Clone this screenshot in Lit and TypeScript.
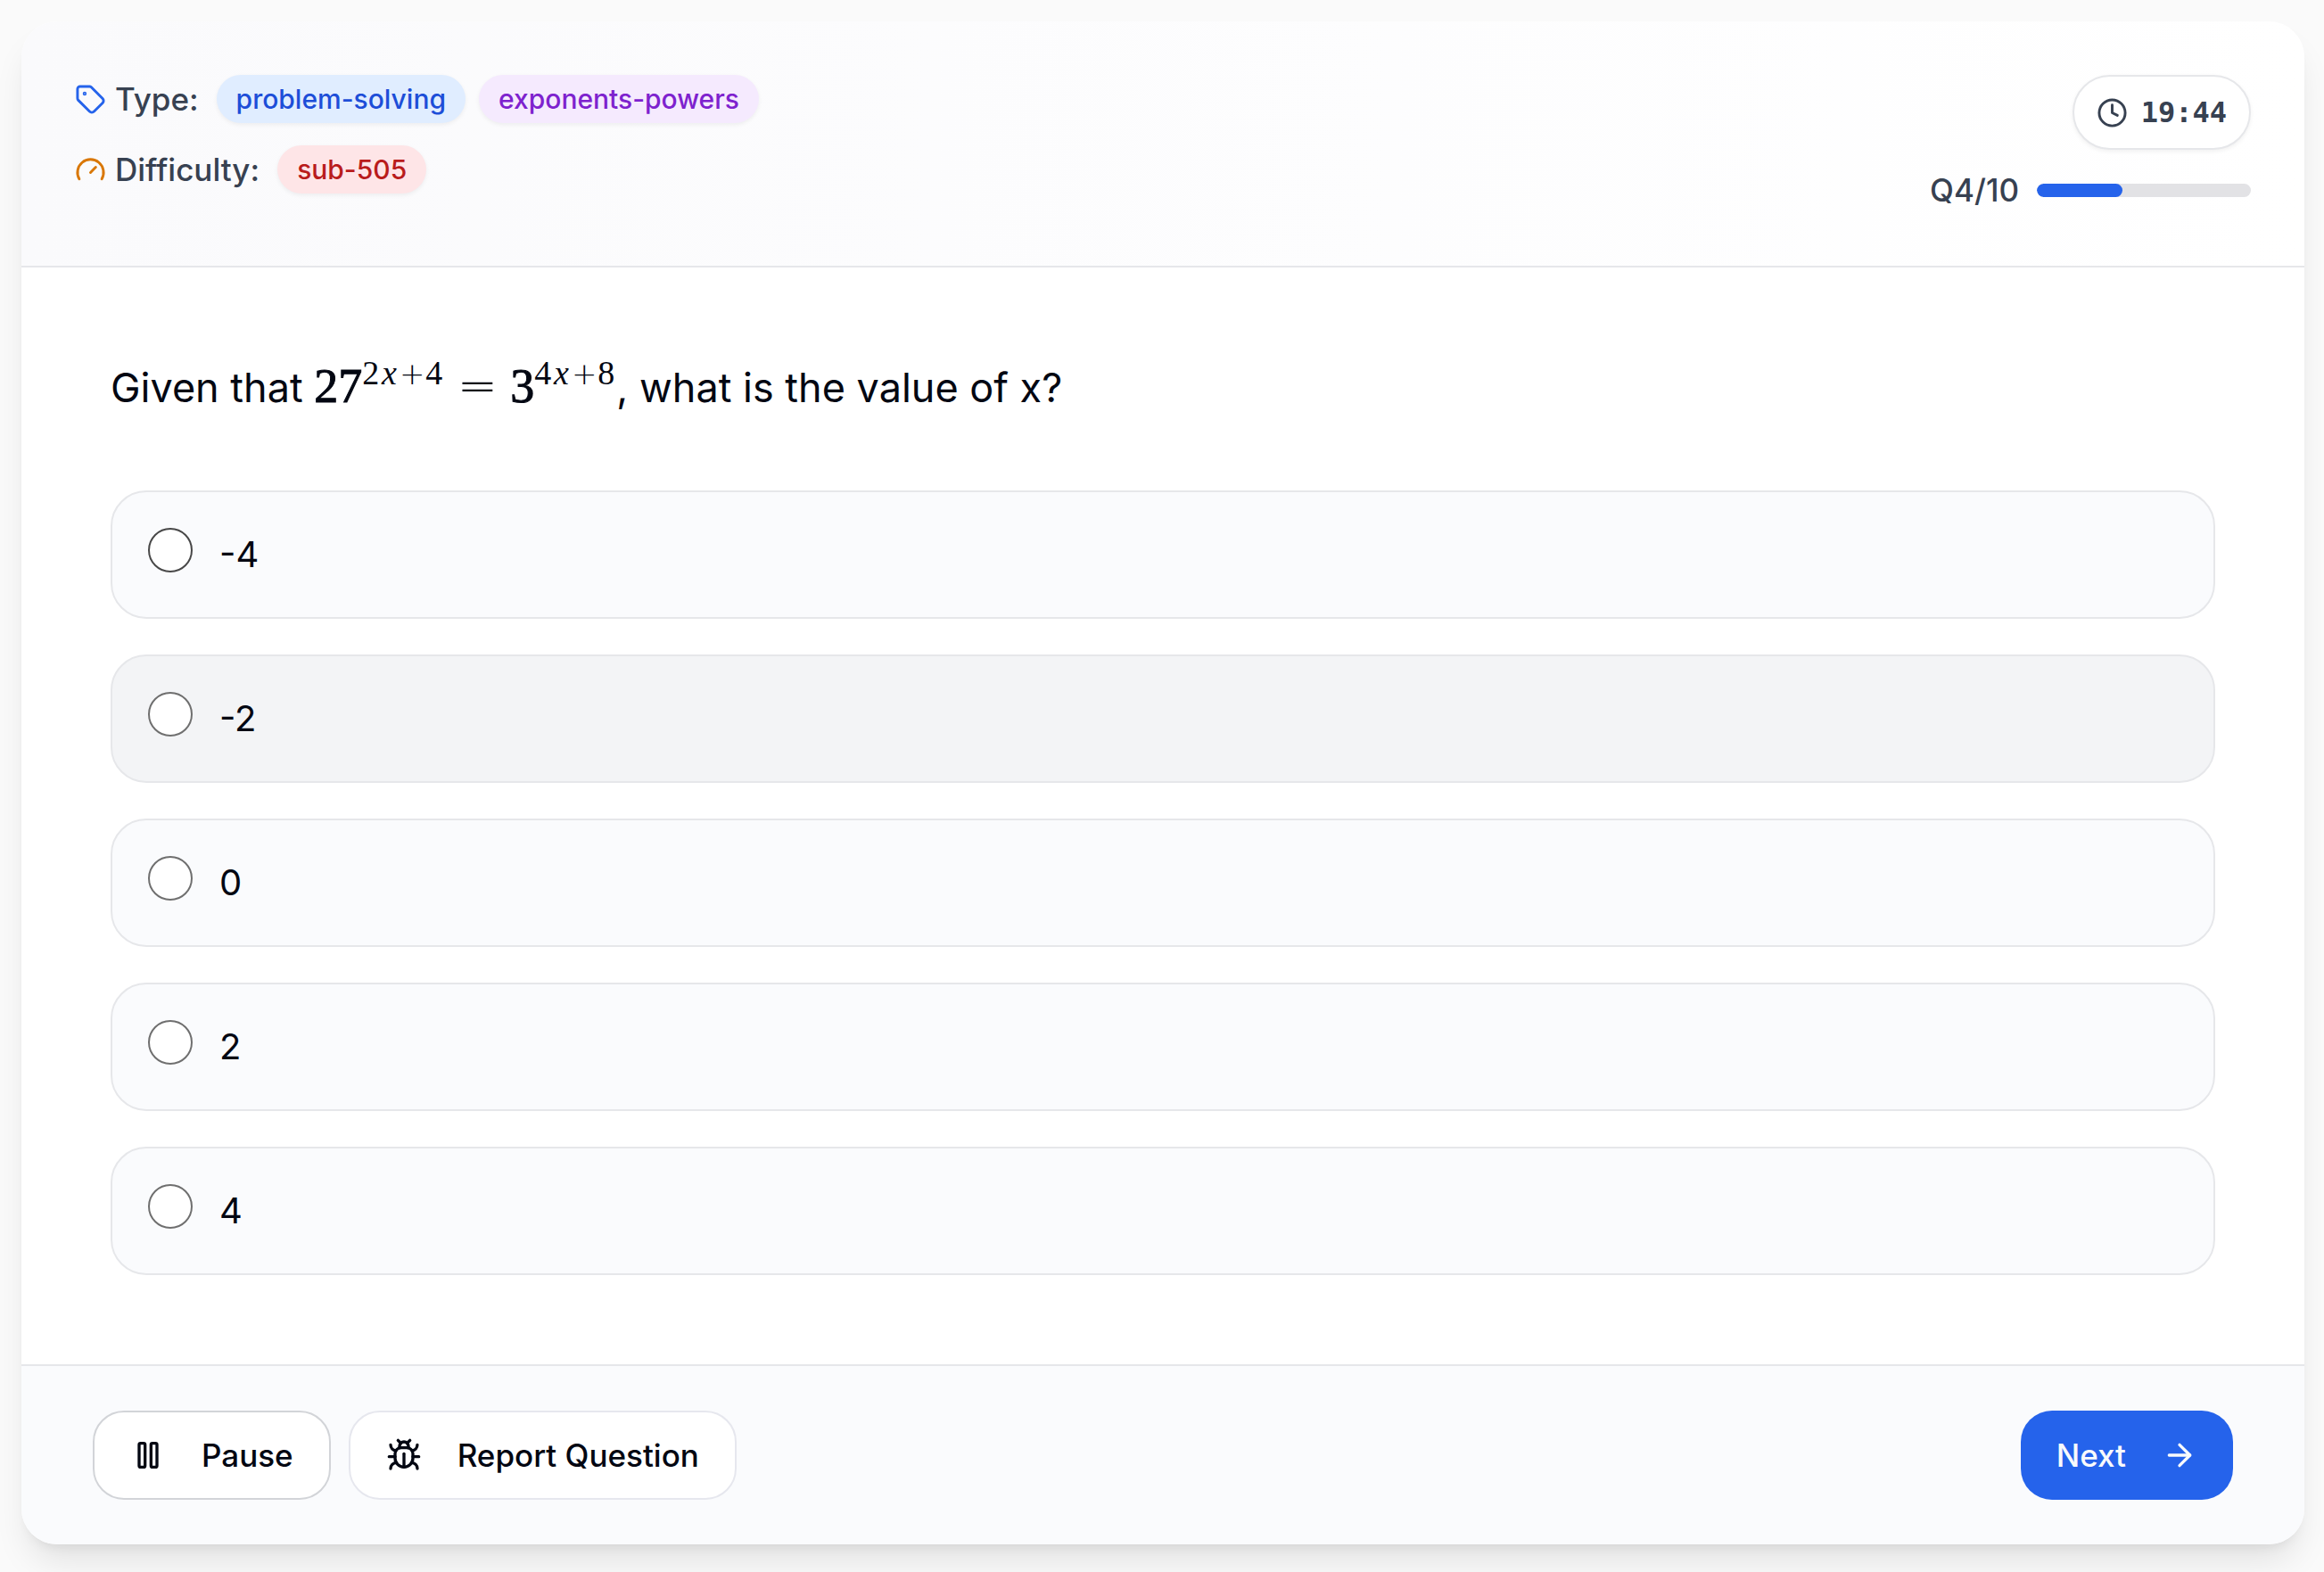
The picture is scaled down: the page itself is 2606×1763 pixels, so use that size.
import { LitElement, html, css, svg } from "lit";
import { customElement, property, state } from "lit/decorators.js";

const ICONS = {
  tag: svg`<path d="M12.586 2.586A2 2 0 0 0 11.172 2H4a2 2 0 0 0-2 2v7.172a2 2 0 0 0 .586 1.414l8.704 8.704a2.426 2.426 0 0 0 3.42 0l6.58-6.58a2.426 2.426 0 0 0 0-3.42z"/><circle cx="7.5" cy="7.5" r=".5" fill="currentColor"/>`,
  gauge: svg`<path d="m12 14 4-4"/><path d="M3.34 19a10 10 0 1 1 17.32 0"/>`,
  clock: svg`<circle cx="12" cy="12" r="10"/><polyline points="12 6 12 12 16 14"/>`,
  pause: svg`<rect x="14" y="4" width="4" height="16" rx="1"/><rect x="6" y="4" width="4" height="16" rx="1"/>`,
  bug: svg`<path d="m8 2 1.88 1.88"/><path d="M14.12 3.88 16 2"/><path d="M9 7.13v-1a3.003 3.003 0 1 1 6 0v1"/><path d="M12 20c-3.3 0-6-2.7-6-6v-3a4 4 0 0 1 4-4h4a4 4 0 0 1 4 4v3c0 3.3-2.7 6-6 6"/><path d="M12 20v-9"/><path d="M6.53 9C4.6 8.8 3 7.1 3 5"/><path d="M6 13H2"/><path d="M3 21c0-2.1 1.7-3.9 3.8-4"/><path d="M20.97 5c0 2.1-1.6 3.8-3.5 4"/><path d="M22 13h-4"/><path d="M17.2 17c2.1.1 3.8 1.9 3.8 4"/>`,
  arrow: svg`<path d="M5 12h14"/><path d="m12 5 7 7-7 7"/>`,
};

@customElement("line-icon")
class LineIcon extends LitElement {
  @property() name: keyof typeof ICONS = "tag";

  static styles = css`
    :host {
      display: block;
      flex: none;
      width: 40px;
      height: 40px;
    }
    .icon {
      display: block;
      width: 100%;
      height: 100%;
      fill: none;
      stroke: currentColor;
      stroke-width: 2;
      stroke-linecap: round;
      stroke-linejoin: round;
    }
  `;

  render() {
    return html`<svg class="icon" viewBox="0 0 24 24" aria-hidden="true">${ICONS[this.name]}</svg>`;
  }
}

@customElement("app-root")
class AppRoot extends LitElement {
  @state() private answer = "";
  private answers = ["-4", "-2", "0", "2", "4"];
  private current = 4;
  private total = 10;

  static styles = css`
    :host {
      display: block;
      box-sizing: border-box;
      min-height: 100vh;
      padding: 24px 22px 31px 24px;
      overflow: hidden;
      background: #fafafa;
      color: #030712;
      font-family: Inter, "Liberation Sans", sans-serif;
      font-size: 35px;
      line-height: 50px;
    }
    .card {
      border-radius: 40px;
      background: #fff;
      box-shadow: 0 25px 38px -8px rgb(0 0 0 / 0.1), 0 10px 15px -10px rgb(0 0 0 / 0.1);
    }
    .head {
      display: flex;
      justify-content: space-between;
      align-items: flex-start;
      padding: 60px;
      border-bottom: 2px solid #e6e7ea;
      border-radius: 40px 40px 0 0;
      background: linear-gradient(to right, #fafafc, #fff);
      color: #374151;
      font-weight: 500;
    }
    .facts {
      display: grid;
      gap: 25px;
    }
    .fact,
    .label,
    .tags,
    .progress,
    .timer,
    .actions {
      display: flex;
      align-items: center;
    }
    .fact {
      gap: 20px;
      height: 54px;
    }
    .label {
      gap: 10px;
    }
    .tags {
      gap: 15px;
    }
    .small {
      width: 35px;
      height: 35px;
    }
    .type-icon {
      color: #2563eb;
    }
    .level-icon {
      color: #d97706;
    }
    .tag {
      padding: 7px 22px;
      border-radius: 27px;
      box-shadow: 0 2px 5px rgb(0 0 0 / 0.06);
      font-size: 30px;
      font-weight: 500;
      line-height: 40px;
    }
    .blue {
      background: #e0edff;
      color: #1d4ed8;
    }
    .purple {
      background: #f5eafe;
      color: #7e22ce;
    }
    .red {
      background: #fee5e7;
      color: #b91c1c;
    }
    .status {
      display: grid;
      justify-items: end;
      gap: 20px;
    }
    .timer {
      gap: 15px;
      padding: 15px 25px;
      border: 2px solid #e6e7ea;
      border-radius: 42px;
      background: #fff;
      box-shadow: 0 2px 5px rgb(0 0 0 / 0.06);
      font-family: "DejaVu Sans Mono", monospace;
      font-size: 32px;
      font-weight: 700;
    }
    .progress {
      gap: 20px;
    }
    .bar {
      width: 240px;
      height: 15px;
      border-radius: 8px;
      background: #e2e2e5;
      overflow: hidden;
    }
    .fill {
      height: 100%;
      border-radius: 8px;
      background: #2563eb;
    }
    .body {
      padding: 100px;
    }
    .question {
      margin: 0 0 80px;
      font-size: 45px;
      font-weight: 400;
      line-height: 70px;
    }
    .math {
      font-family: "Liberation Serif", serif;
      font-size: 54px;
      line-height: 0;
      white-space: nowrap;
      -webkit-text-stroke: 1px currentColor;
    }
    .power {
      padding-right: 2px;
      font-size: 38px;
      vertical-align: 20px;
      -webkit-text-stroke: 0;
    }
    .var {
      display: inline-block;
      width: 22px;
      text-align: center;
      font-style: italic;
    }
    .plus,
    .equals {
      display: inline-block;
      text-align: center;
      font-family: "DejaVu Sans", sans-serif;
      font-weight: 200;
    }
    .plus {
      width: 30px;
      font-size: 34px;
    }
    .equals {
      width: 46px;
      padding: 0 14px;
      -webkit-text-stroke: 0;
    }
    .answers {
      display: grid;
      gap: 40px;
      margin: 0;
      padding: 0;
      border: 0;
    }
    .answer {
      display: flex;
      align-items: flex-start;
      gap: 30px;
      padding: 40px;
      border: 2px solid #e6e7ea;
      border-radius: 40px;
      background: #fafbfd;
      font-size: 40px;
      line-height: 60px;
      cursor: pointer;
    }
    .answer.active {
      background: #f3f4f6;
    }
    .radio {
      appearance: none;
      flex: none;
      box-sizing: border-box;
      width: 50px;
      height: 50px;
      margin: 0;
      border: 2px solid #6f6f6f;
      border-radius: 50%;
      background: #fff;
    }
    .answer:first-child .radio {
      border-color: #484848;
    }
    .radio:checked {
      border: 14px solid #2563eb;
    }
    .foot {
      display: flex;
      justify-content: space-between;
      padding: 50px 80px;
      border-top: 2px solid #e6e7ea;
      border-radius: 0 0 40px 40px;
      background: #fafbfd;
    }
    .actions {
      gap: 20px;
    }
    .button {
      display: flex;
      align-items: center;
      gap: 40px;
      height: 100px;
      padding: 0 40px;
      border: 2px solid #e6e7ee;
      border-radius: 35px;
      background: #fff;
      color: #030712;
      font: 500 35px/50px Inter, "Liberation Sans", sans-serif;
      cursor: pointer;
    }
    .pause {
      border-color: #d2d4d8;
    }
    .next {
      border: 0;
      background: #2563eb;
      color: #f8fafc;
    }
  `;

  render() {
    return html`
      <main class="card">
        <header class="head">
          <div class="facts">
            <div class="fact">
              <span class="label"><line-icon class="small type-icon" name="tag"></line-icon>Type:</span>
              <span class="tags"><span class="tag blue">problem-solving</span><span class="tag purple">exponents-powers</span></span>
            </div>
            <div class="fact">
              <span class="label"><line-icon class="small level-icon" name="gauge"></line-icon>Difficulty:</span>
              <span class="tag red">sub-505</span>
            </div>
          </div>
          <div class="status">
            <div class="timer"><line-icon class="small" name="clock"></line-icon><time>19:44</time></div>
            <div class="progress">
              <span>Q${this.current}/${this.total}</span>
              <div class="bar"><div class="fill" style="width:${(this.current / this.total) * 100}%"></div></div>
            </div>
          </div>
        </header>
        <section class="body">
          <h1 class="question" id="question">Given that <span class="math">27<span class="power">2<span class="var">x</span><span class="plus">+</span>4</span><span class="equals">=</span>3<span class="power">4<span class="var">x</span><span class="plus">+</span>8</span></span>, what is the value of x?</h1>
          <fieldset class="answers" aria-labelledby="question">
            ${this.answers.map(
              (value, i) => html`
                <label class="answer ${i === 1 ? "active" : ""}">
                  <input class="radio" type="radio" name="answer" value=${value}
                    .checked=${this.answer === value} @change=${() => (this.answer = value)} />
                  <span>${value}</span>
                </label>`
            )}
          </fieldset>
        </section>
        <footer class="foot">
          <div class="actions">
            <button class="button pause" type="button"><line-icon name="pause"></line-icon>Pause</button>
            <button class="button" type="button"><line-icon name="bug"></line-icon>Report Question</button>
          </div>
          <button class="button next" type="button">Next<line-icon name="arrow"></line-icon></button>
        </footer>
      </main>
    `;
  }
}
